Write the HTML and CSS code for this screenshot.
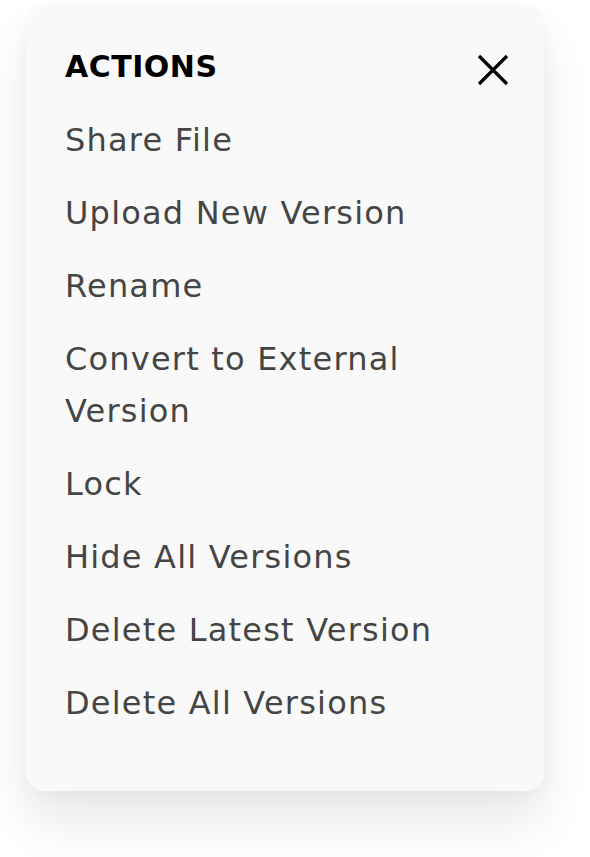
FILE: index.html
```html
<!DOCTYPE html>
<html lang="en">
<head>
<meta charset="utf-8">
<link rel="stylesheet" href="styles.css">
</head>
<body>
<div class="card">
  <div class="head">
    <h2 class="title">ACTIONS</h2>
    <button class="close" aria-label="Close">
      <svg width="34" height="34" viewBox="0 0 34 34"><path d="M3 3 L31 31 M31 3 L3 31" stroke="#000" stroke-width="3.2" fill="none"/></svg>
    </button>
  </div>
  <ul class="menu">
    <li>Share File</li>
    <li>Upload New Version</li>
    <li>Rename</li>
    <li>Convert to External Version</li>
    <li>Lock</li>
    <li>Hide All Versions</li>
    <li>Delete Latest Version</li>
    <li>Delete All Versions</li>
  </ul>
</div>
</body>
</html>
```
FILE: styles.css
```css
html, body { margin: 0; padding: 0; background: #fff; }
body { padding: 6px 0 0 26px; font-family: "DejaVu Sans", sans-serif; min-height: 857px; box-sizing: border-box; }
.card {
  width: 518px;
  height: 785px;
  box-sizing: border-box;
  background: #f9f9f9;
  border-radius: 18px;
  padding: 35px 34px 0 39px;
  box-shadow: 0 32px 50px rgba(0,0,0,0.09), 0 4px 18px rgba(0,0,0,0.035);
}
.head { display: flex; align-items: center; justify-content: space-between; height: 52px; margin-bottom: 21px; }
.title { margin: 0; font-size: 30px; font-weight: 700; color: #000; line-height: 52px; letter-spacing: 0.5px; }
.close { border: 0; background: none; padding: 0; width: 34px; height: 34px; display: block; margin-top: 6px; }
.close svg { display: block; }
.menu { list-style: none; margin: 0; padding: 0; display: flex; flex-direction: column; gap: 21px; }
.menu li { font-size: 32px; line-height: 52px; color: #454545; letter-spacing: 1.2px; }
```
